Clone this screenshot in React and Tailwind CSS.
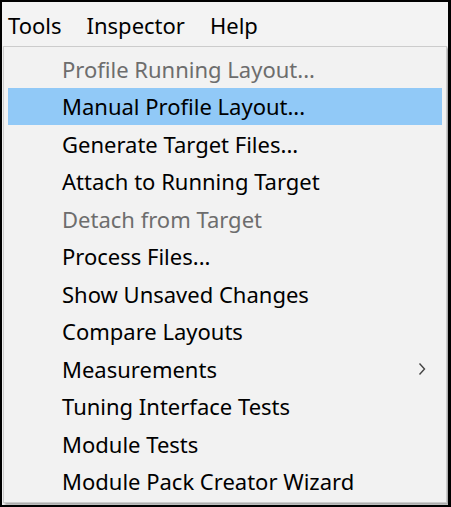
import React from 'react';

const items = [
  { label: 'Profile Running Layout...', disabled: true },
  { label: 'Manual Profile Layout...', active: true },
  { label: 'Generate Target Files...' },
  { label: 'Attach to Running Target' },
  { label: 'Detach from Target', disabled: true },
  { label: 'Process Files...' },
  { label: 'Show Unsaved Changes' },
  { label: 'Compare Layouts' },
  { label: 'Measurements', submenu: true },
  { label: 'Tuning Interface Tests' },
  { label: 'Module Tests' },
  { label: 'Module Pack Creator Wizard' },
];

const MenuItem = ({ label, disabled, active, submenu }) => (
  <div
    className={`relative h-[37.5px] flex items-center pl-[54px] ${
      active ? 'bg-[#91c9f7]' : ''
    } ${disabled ? 'text-[#6d6d6d]' : 'text-black'}`}
  >
    <span>{label}</span>
    {submenu && (
      <svg className="absolute right-[16px] top-1/2 -translate-y-1/2" width="8" height="14" viewBox="0 0 8 14">
        <path d="M1.5 1.5 L6.5 7 L1.5 12.5" fill="none" stroke="#444" strokeWidth="1.4" />
      </svg>
    )}
  </div>
);

export default function App() {
  return (
    <div
      className="w-[451px] h-[507px] border-2 border-r-[3px] border-black bg-[#f0f0f0] flex flex-col text-[22px] leading-none"
      style={{ fontFamily: '"Noto Sans", "Open Sans", sans-serif' }}
    >
      <div className="h-[44px] flex items-center gap-[25px] pl-[6px] pt-[2px] text-black bg-[#f3f3f3]">
        <span>Tools</span>
        <span>Inspector</span>
        <span>Help</span>
      </div>
      <div className="flex-1 ml-[1px] mr-[1px] mb-[2px] border border-[#cccccc] bg-[#f2f2f2] shadow-[2px_2px_2px_rgba(0,0,0,0.3)] pt-[3px] px-[4px]">
        {items.map((item) => (
          <MenuItem key={item.label} {...item} />
        ))}
      </div>
    </div>
  );
}
